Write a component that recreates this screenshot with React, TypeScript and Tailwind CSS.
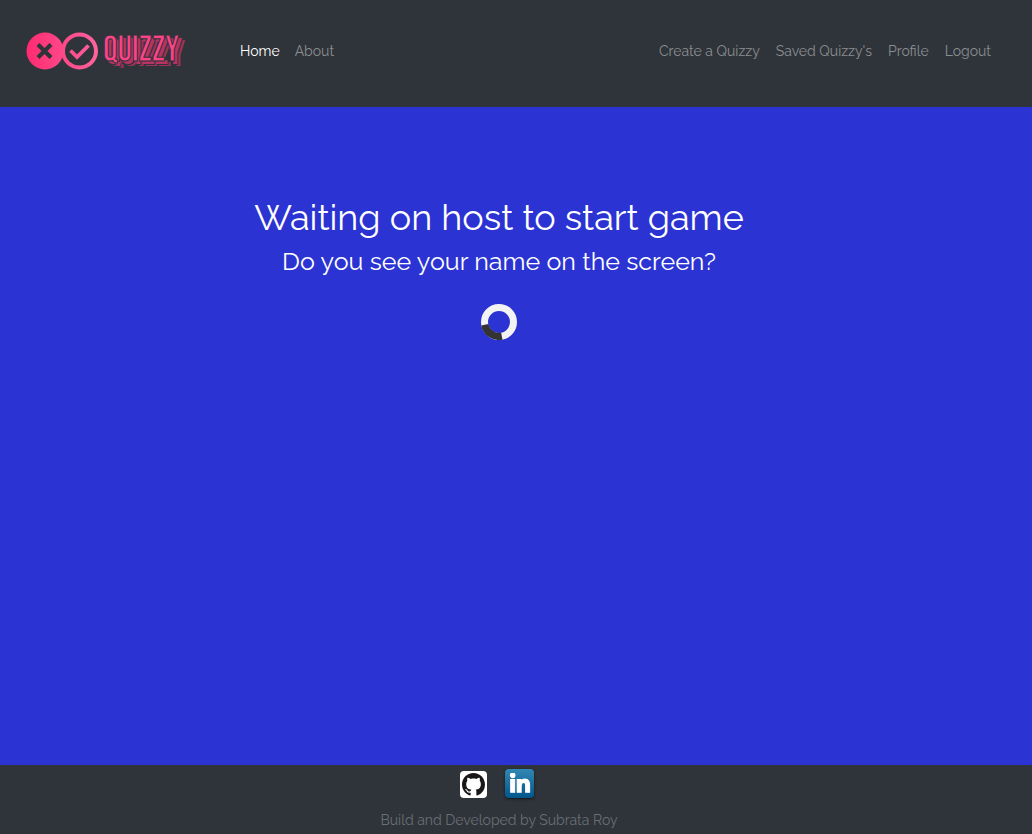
import React from "react";
import { FaGithub, FaLinkedinIn } from "react-icons/fa";

const accountLinks = ["Create a Quizzy", "Saved Quizzy's", "Profile", "Logout"];

function Logo() {
  return (
    <a href="#home" aria-label="Quizzy home" className="flex w-[165px] items-center gap-1">
      <svg width="74" height="40" viewBox="0 0 74 40" fill="none" aria-hidden="true">
        <defs>
          <linearGradient id="brand" x1="0" y1="20" x2="74" y2="20" gradientUnits="userSpaceOnUse">
            <stop stopColor="#ff2970" />
            <stop offset="1" stopColor="#ff659e" />
          </linearGradient>
        </defs>
        <circle cx="20" cy="20" r="18.5" fill="url(#brand)" />
        <circle cx="54.5" cy="20" r="18.5" fill="url(#brand)" />
        <circle cx="54.5" cy="20" r="14.5" fill="#2f343a" />
        <path d="M13 13.5 26 26.5M26 13.5 13 26.5" stroke="#2f343a" strokeWidth="4.2" />
        <path d="M45.5 19.5 52 26 63.5 14.5" stroke="url(#brand)" strokeWidth="3.8" />
      </svg>
      <span className="font-['Bebas_Neue','Oswald','Roboto_Condensed','Roboto',sans-serif] text-[36px] leading-9 text-[#fc4385] [-webkit-text-stroke:1px_#2f343a] [text-shadow:3px_3px_0_#b73364,4px_4px_0_#2f343a,6px_5px_0_#a3315b]">
        QUIZZY
      </span>
    </a>
  );
}

export default function App() {
  return (
    <div className="flex min-h-screen flex-col bg-[#2b33d3] font-['Raleway','Open_Sans',sans-serif] font-normal">
      <header className="flex h-[107px] items-center justify-between bg-[#2f343a] pr-[41px] pb-[5px] pl-[25px]">
        <div className="flex items-center gap-[50px]">
          <Logo />
          <nav aria-label="Main" className="flex gap-[15px] text-sm leading-6">
            <a href="#home" aria-current="page" className="text-white">Home</a>
            <a href="#about" className="text-[#8b8e91]">About</a>
          </nav>
        </div>
        <nav aria-label="Account" className="flex gap-4 text-sm leading-6 text-[#8b8e91]">
          {accountLinks.map((label) => (
            <a key={label} href="#account">{label}</a>
          ))}
        </nav>
      </header>

      <main className="flex flex-1 flex-col items-center pt-[88px] pr-[34px] text-center text-white">
        <h1 className="text-4xl leading-[44px]">Waiting on host to start game</h1>
        <h2 className="mt-1 text-[25px] leading-9">Do you see your name on the screen?</h2>
        <svg role="status" aria-label="Loading" className="mt-6" width="38" height="38" viewBox="0 0 38 38" fill="none">
          <circle cx="19" cy="19" r="14.5" stroke="#f3f3f3" strokeWidth="7" />
          <path d="M21.8 33.2A14.5 14.5 0 0 1 4.8 21.8" stroke="#333333" strokeWidth="7.4" />
        </svg>
      </main>

      <footer className="flex h-[69px] flex-col items-center bg-[#2f343a] pt-1 pr-[34px]">
        <div className="flex items-end gap-[18px] pr-1">
          <a href="#github" aria-label="GitHub" className="flex size-[27px] items-center justify-center rounded bg-white text-[#191717]">
            <svg width="23" height="23" viewBox="0 0 16 16" fill="currentColor" aria-hidden="true">
              <path d="M8 0C3.58 0 0 3.58 0 8c0 3.54 2.29 6.53 5.47 7.59.4.07.55-.17.55-.38 0-.19-.01-.82-.01-1.49-2.01.37-2.53-.49-2.69-.94-.09-.23-.48-.94-.82-1.13-.28-.15-.68-.52-.01-.53.63-.01 1.08.58 1.23.82.72 1.21 1.87.87 2.33.66.07-.52.28-.87.51-1.07-1.78-.2-3.64-.89-3.64-3.95 0-.87.31-1.59.82-2.15-.08-.2-.36-1.02.08-2.12 0 0 .67-.21 2.2.82.64-.18 1.32-.27 2-.27s1.36.09 2 .27c1.53-1.04 2.2-.82 2.2-.82.44 1.1.16 1.92.08 2.12.51.56.82 1.27.82 2.15 0 3.07-1.87 3.75-3.65 3.95.29.25.54.73.54 1.48 0 1.07-.01 1.93-.01 2.2 0 .21.15.46.55.38A8.01 8.01 0 0 0 16 8c0-4.42-3.58-8-8-8Z" />
            </svg>
          </a>
          <a href="#linkedin" aria-label="LinkedIn" className="flex size-[29px] items-center justify-center rounded bg-linear-to-b from-[#3187b4] to-[#00568b] text-white shadow-sm shadow-black/50">
            <FaLinkedinIn size={22} stroke="currentColor" strokeWidth={24} />
          </a>
        </div>
        <p className="mt-[10px] text-sm leading-6 text-[#6a6e74]">Build and Developed by Subrata Roy</p>
      </footer>
    </div>
  );
}
